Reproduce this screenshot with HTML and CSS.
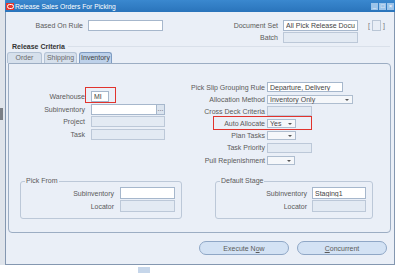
FILE: index.html
```html
<!DOCTYPE html>
<html lang="en">
<head>
    <meta charset="UTF-8">
    <title>Release Sales Orders For Picking</title>
    <link rel="stylesheet" href="styles.css">
</head>
<body>
    <div class="desk">
        <div class="side"><div class="side-block"></div></div>
        <div class="window">
            <div class="titlebar">
                <span class="app-icon"><span></span></span>
                <span class="title">Release Sales Orders For Picking</span>
                <span class="win-buttons">
                    <span class="wb">_</span><span class="wb">&#9633;</span><span class="wb">&times;</span>
                </span>
            </div>

            <div class="head">
                <div class="row">
                    <label class="lbl w-rule">Based On Rule</label>
                    <input class="fld w75" type="text">
                    <label class="lbl w-doc">Document Set</label>
                    <input class="fld w75" type="text" value="All Pick Release Documents">
                    <span class="bracket">[<span class="tiny-box"></span>]</span>
                </div>
                <div class="row">
                    <label class="lbl w-batch">Batch</label>
                    <input class="fld w75 off" type="text">
                </div>
            </div>

            <div class="criteria">Release Criteria<span class="criteria-line"></span></div>

            <div class="tabs">
                <span class="tab t-order">Order</span>
                <span class="tab t-ship">Shipping</span>
                <span class="tab t-inv active">Inventory</span>
            </div>

            <div class="panel">
                <div class="cols">
                    <div class="col-left">
                        <div class="frow">
                            <label class="lbl w-left">Warehouse</label>
                            <span class="mark-wrap">
                                <input class="fld w18" type="text" value="MI">
                                <span class="mark mark-wh"></span>
                            </span>
                        </div>
                        <div class="frow">
                            <label class="lbl w-left">Subinventory</label>
                            <input class="fld w66" type="text"><span class="lov">...</span>
                        </div>
                        <div class="frow">
                            <label class="lbl w-left">Project</label>
                            <input class="fld w74 off" type="text">
                        </div>
                        <div class="frow">
                            <label class="lbl w-left">Task</label>
                            <input class="fld w74 off" type="text">
                        </div>
                    </div>

                    <div class="col-right">
                        <div class="rrow">
                            <label class="lbl w-right">Pick Slip Grouping Rule</label>
                            <input class="fld w76" type="text" value="Departure, Delivery">
                        </div>
                        <div class="rrow">
                            <label class="lbl w-right">Allocation Method</label>
                            <span class="sel w86">Inventory Only<i class="arrow"></i></span>
                        </div>
                        <div class="rrow">
                            <label class="lbl w-right">Cross Deck Criteria</label>
                            <input class="fld w45 off" type="text">
                        </div>
                        <div class="rrow mark-wrap">
                            <label class="lbl w-right">Auto Allocate</label>
                            <span class="sel w29">Yes<i class="arrow"></i></span>
                            <span class="mark mark-aa"></span>
                        </div>
                        <div class="rrow">
                            <label class="lbl w-right">Plan Tasks</label>
                            <span class="sel w29"><i class="arrow"></i></span>
                        </div>
                        <div class="rrow">
                            <label class="lbl w-right">Task Priority</label>
                            <input class="fld w45 off" type="text">
                        </div>
                        <div class="rrow">
                            <label class="lbl w-right">Pull Replenishment</label>
                            <span class="sel w28"><i class="arrow"></i></span>
                        </div>
                    </div>
                </div>

                <div class="groups">
                    <div class="group g-pick">
                        <span class="legend">Pick From</span>
                        <div class="grow">
                            <label class="lbl w-gpick">Subinventory</label>
                            <input class="fld w55" type="text">
                        </div>
                        <div class="grow">
                            <label class="lbl w-gpick">Locator</label>
                            <input class="fld w55 off" type="text">
                        </div>
                    </div>
                    <div class="group g-stage">
                        <span class="legend">Default Stage</span>
                        <div class="grow">
                            <label class="lbl w-gstage">Subinventory</label>
                            <input class="fld w54" type="text" value="Staging1">
                        </div>
                        <div class="grow">
                            <label class="lbl w-gstage">Locator</label>
                            <input class="fld w54 off" type="text">
                        </div>
                    </div>
                </div>
            </div>

            <div class="actions">
                <button class="pill">Execute N<u>o</u>w</button>
                <button class="pill"><u>C</u>oncurrent</button>
            </div>
        </div>
    </div>
    <div class="scrap"></div>
</body>
</html>
```

FILE: styles.css
```css
body {
    margin: 0;
    background-color: #ffffff;
    font-family: "Liberation Sans", Arial, sans-serif;
    font-size: 7px;
    color: #5a5a5a;
}
.desk {
    display: flex;
}
.side {
    width: 5px;
    height: 265px;
    background-color: #dfe4eb;
}
.side-block {
    width: 3px;
    height: 12px;
    margin-top: 108px;
    background-color: #7a7f86;
}
.window {
    position: relative;
    width: 390px;
    height: 265px;
    box-sizing: border-box;
    background-color: #eaeff7;
    border: 1px solid #8497b0;
    border-top: none;
}
.titlebar {
    display: flex;
    align-items: center;
    height: 12px;
    margin: 0 -1px;
    padding-left: 1px;
    background: linear-gradient(#3a88cf, #2a74bb);
    color: #ffffff;
}
.app-icon {
    display: flex;
    align-items: center;
    justify-content: center;
    width: 8px;
    height: 7px;
    background-color: #e2372e;
}
.app-icon span {
    width: 5px;
    height: 3px;
    border: 1px solid #ffffff;
    border-radius: 3px;
}
.title {
    margin-left: 1px;
    font-size: 6.7px;
}
.win-buttons {
    display: flex;
    gap: 1px;
    margin-left: auto;
    margin-right: 1px;
}
.wb {
    width: 7px;
    height: 7px;
    line-height: 7px;
    text-align: center;
    font-size: 6px;
    background-color: #9cc4ea;
    color: #ffffff;
}

/* top rows */
.head {
    padding-top: 8px;
}
.row {
    display: flex;
    align-items: center;
    height: 11px;
    margin-bottom: 1px;
}
.lbl {
    display: inline-block;
    flex: none;
    text-align: right;
    white-space: nowrap;
}
.w-rule { width: 77px; margin-right: 5px; }
.w-doc { width: 115px; margin-right: 5px; }
.w-batch { width: 272px; margin-right: 5px; }
.fld {
    flex: none;
    height: 11px;
    box-sizing: border-box;
    margin: 0;
    padding: 0 2px;
    border: 1px solid #a6b7cc;
    background-color: #ffffff;
    font-family: inherit;
    font-size: 7px;
    color: #444444;
    outline: none;
}
.fld.off {
    background-color: #e3eaf3;
    border-color: #bcc8d8;
}
.w18 { width: 18px; }
.w45 { width: 45px; }
.w54 { width: 54px; }
.w55 { width: 55px; }
.w66 { width: 66px; }
.w74 { width: 74px; }
.w75 { width: 75px; }
.w76 { width: 76px; }
.bracket {
    display: flex;
    align-items: center;
    gap: 2px;
    margin-left: 10px;
    color: #777777;
}
.tiny-box {
    width: 9px;
    height: 11px;
    box-sizing: border-box;
    border: 1px solid #b9c6d6;
    background-color: #e8eef6;
}

.criteria {
    display: flex;
    align-items: center;
    height: 8px;
    margin-top: -2px;
    padding-left: 6px;
    font-weight: bold;
    color: #333333;
}
.criteria-line {
    flex: 1;
    height: 1px;
    margin: 0 4px 0 3px;
    background-color: #d9e0ea;
}

/* tabs */
.tabs {
    display: flex;
    gap: 2px;
    height: 11px;
    margin-top: 2px;
    padding-left: 1px;
}
.tab {
    width: 35px;
    box-sizing: border-box;
    line-height: 10px;
    text-align: center;
    border: 1px solid #b4c3d5;
    border-bottom: none;
    border-radius: 3px 3px 0 0;
    background-color: #d6e0ec;
    color: #6a6a6a;
}
.t-ship, .t-inv { width: 33px; }
.tab.active {
    background-color: #bdd1ea;
    border-color: #7f9cc2;
    color: #444444;
}

/* panel */
.panel {
    width: 383px;
    height: 170px;
    box-sizing: border-box;
    margin-left: 2px;
    border: 1px solid #9cadc3;
    border-radius: 0 4px 4px 4px;
}
.cols {
    display: grid;
    grid-template-columns: 161px 1fr;
}
.col-left {
    padding-top: 27px;
}
.frow {
    display: flex;
    align-items: center;
    height: 11px;
    margin-bottom: 1.6px;
}
.w-left { width: 76px; margin-right: 6px; }
.lov {
    width: 8px;
    height: 11px;
    box-sizing: border-box;
    border: 1px solid #a6b7cc;
    border-left: none;
    background-color: #dbe4ef;
    line-height: 7px;
    text-align: center;
    color: #555555;
}
.col-right {
    padding-top: 18px;
}
.rrow {
    display: flex;
    align-items: center;
    height: 10px;
    margin-bottom: 2.2px;
}
.rrow .fld {
    height: 10px;
}
.w-right { width: 95px; margin-right: 2px; }
.sel {
    position: relative;
    height: 9px;
    box-sizing: border-box;
    padding-left: 2px;
    border: 1px solid #aebdcf;
    background-color: #f5f7fa;
    line-height: 7px;
    color: #4a4a4a;
}
.w28 { width: 28px; }
.w29 { width: 29px; }
.w86 { width: 86px; }
.arrow {
    position: absolute;
    right: 3px;
    top: 3px;
    border-left: 2px solid transparent;
    border-right: 2px solid transparent;
    border-top: 2px solid #555555;
}

/* red annotation boxes */
.mark-wrap {
    position: relative;
    display: flex;
    align-items: center;
}
.mark {
    position: absolute;
    border: 1.5px solid #e1332d;
    pointer-events: none;
}
.mark-wh {
    left: -6px;
    top: -4px;
    width: 29px;
    height: 14px;
}
.mark-aa {
    left: 43px;
    top: -3px;
    width: 97px;
    height: 12px;
}

/* group boxes */
.groups {
    display: flex;
    gap: 33px;
    margin-top: 14px;
    padding-left: 11px;
}
.group {
    position: relative;
    height: 38px;
    box-sizing: border-box;
    padding-top: 5px;
    border: 1px solid #bcc8d8;
    border-radius: 3px;
}
.g-pick { width: 162px; }
.g-stage { width: 158px; }
.legend {
    position: absolute;
    left: 4px;
    top: -5px;
    padding: 0 1px;
    background-color: #eaeff7;
    line-height: 8px;
}
.grow {
    display: flex;
    align-items: center;
    height: 12px;
    margin-bottom: 1px;
}
.grow .fld {
    height: 12px;
}
.w-gpick { width: 93px; margin-right: 6px; }
.w-gstage { width: 91px; margin-right: 5px; }

/* buttons */
.actions {
    display: flex;
    justify-content: flex-end;
    gap: 8px;
    margin-top: 8px;
    padding-right: 7px;
}
.pill {
    width: 90px;
    height: 14px;
    padding: 0;
    border: 1px solid #8fa7c6;
    border-radius: 7px;
    background-color: #d3e2f4;
    font-family: inherit;
    font-size: 7px;
    color: #5a5a5a;
}
.scrap {
    width: 12px;
    height: 6px;
    margin: 2px 0 0 138px;
    background-color: #c6d6ea;
}
```
